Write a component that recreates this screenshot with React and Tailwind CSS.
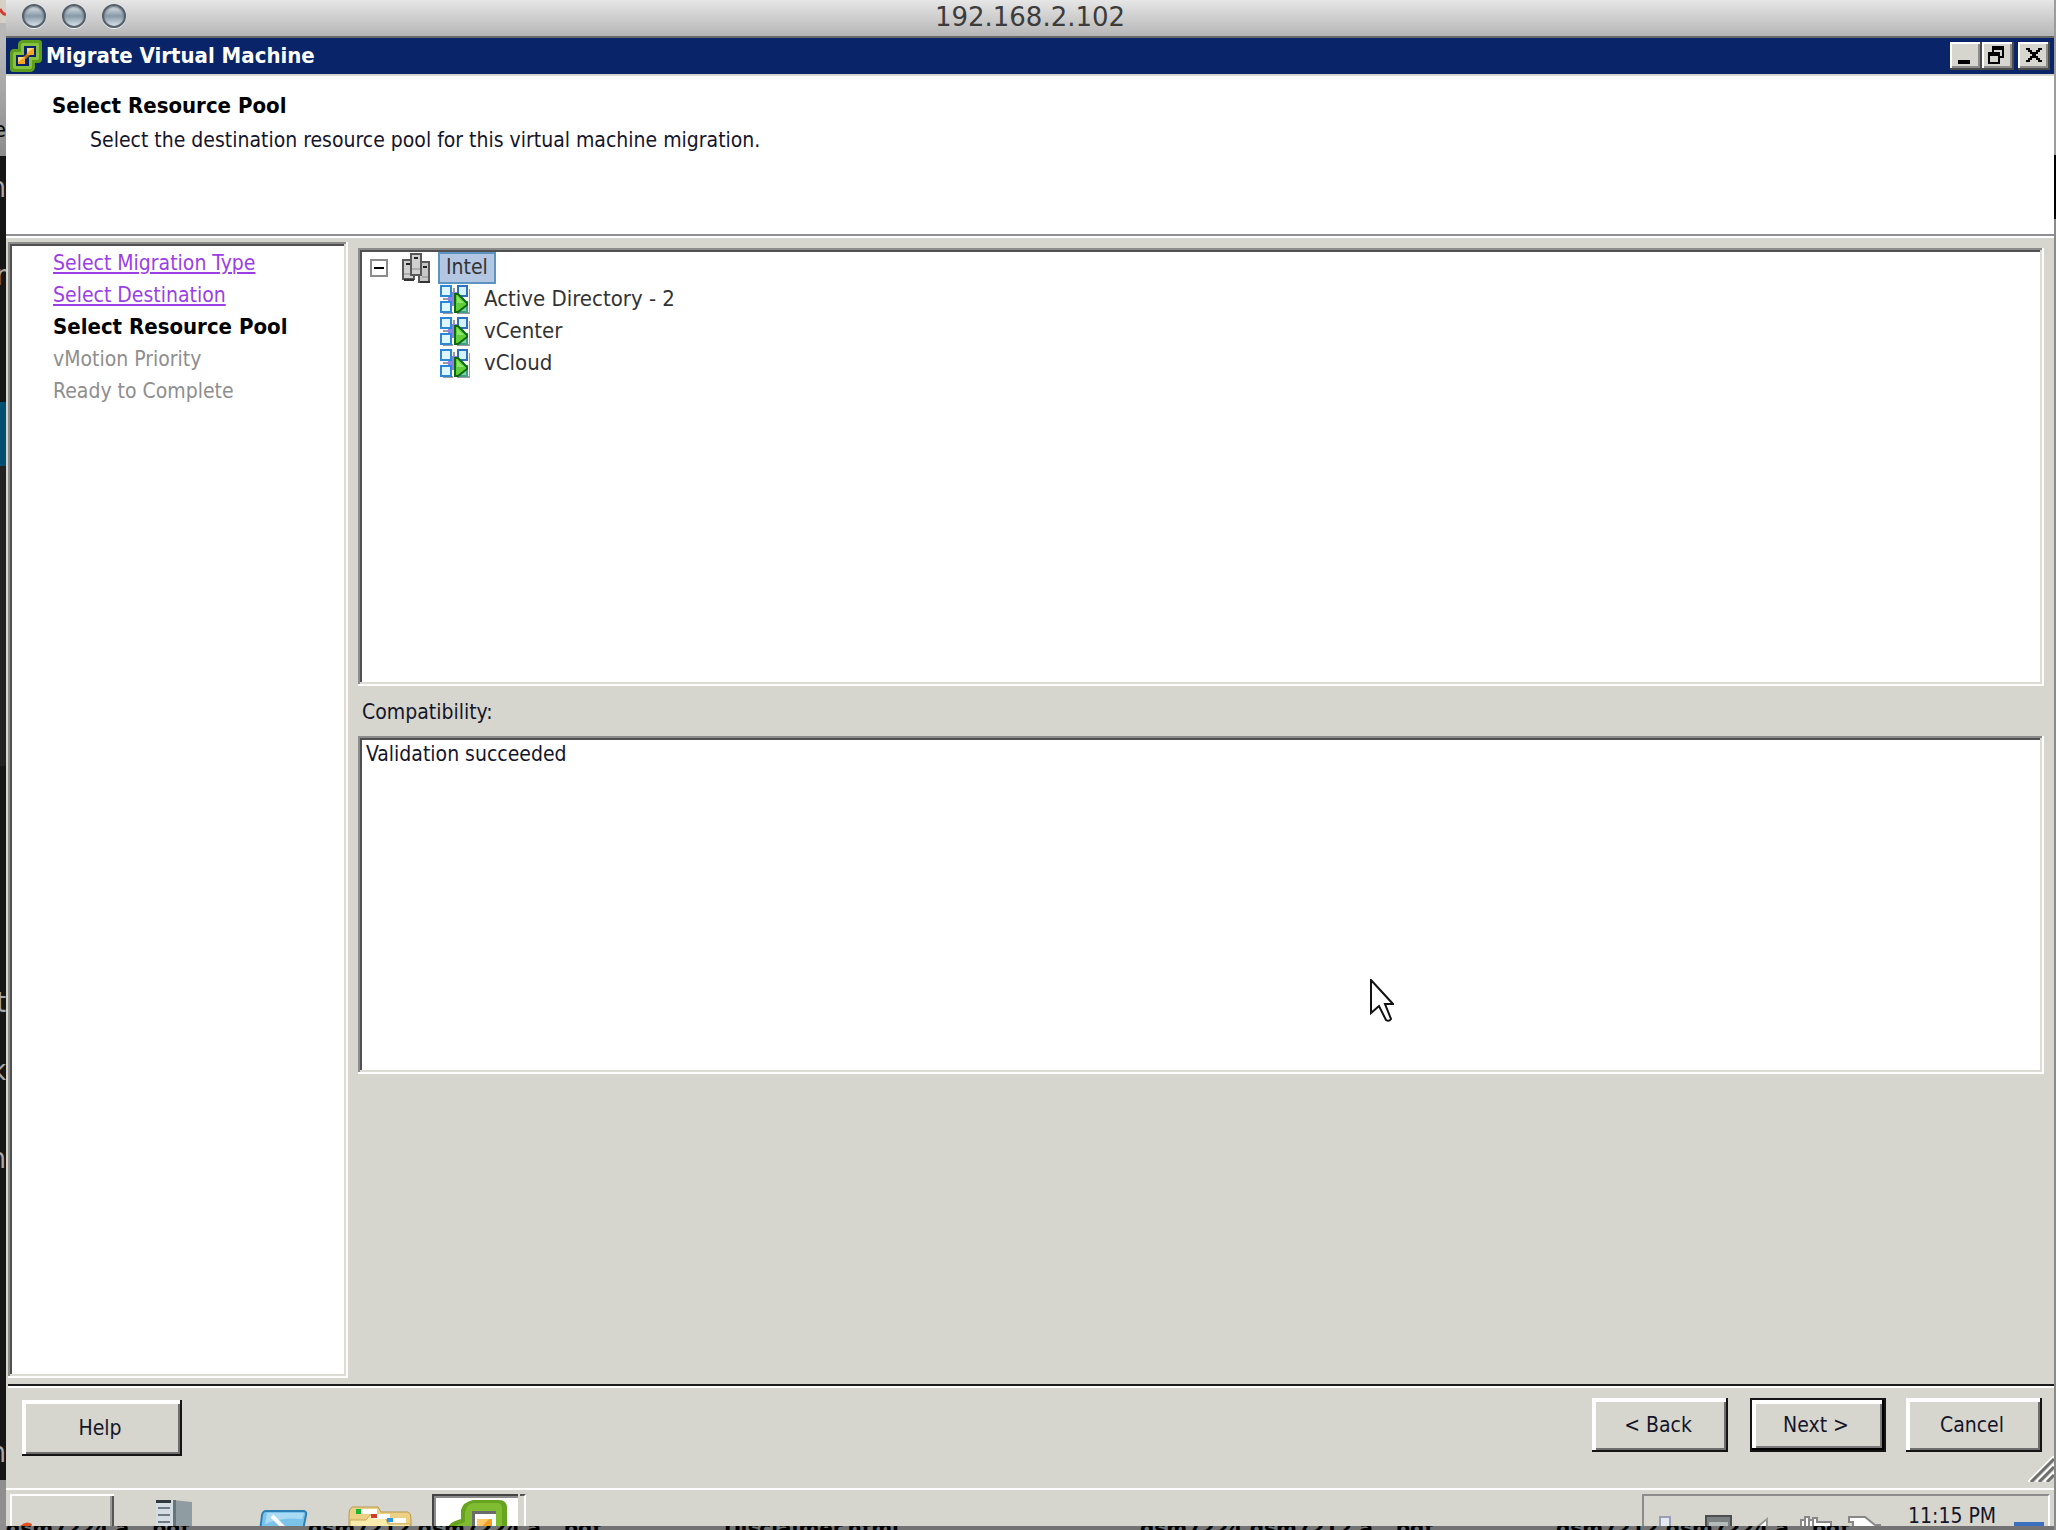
import React from "react";

const sunken =
  "shadow-[inset_-2px_-2px_0_#fdfdfb,inset_2px_2px_0_#8c8c8c,inset_-4px_-4px_0_#dcdcd5,inset_4px_4px_0_#505050]";
const raised =
  "shadow-[inset_-2px_-2px_0_#141414,inset_4px_4px_0_#ffffff,inset_-4px_-4px_0_#6e6e6e]";
const raisedDefault =
  "border-2 border-[#141414] shadow-[inset_-2px_-2px_0_#000000,inset_4px_4px_0_#ffffff,inset_-4px_-4px_0_#7a7a7a]";
const captionButton =
  "flex h-7 w-8 items-center justify-center bg-[#d6d6ce] shadow-[inset_-2px_-2px_0_#4a4a4a,inset_2px_2px_0_#ffffff,inset_-4px_-4px_0_#8c8c8c]";

function VSphereLogo({ className }) {
  return (
    <svg viewBox="0 0 32 32" className={className} aria-hidden="true">
      <path
        d="M13 0H29Q32 0 32 3V19Q32 22 29 23H25V28Q24 32 20 32H3Q0 32 0 29V13Q0 10 3 9H8V4Q9 0 13 0Z"
        fill="#5d9c1d"
      />
      <path
        d="M13 3H28Q29 3 29 5V18Q29 20 27 20H22V27Q22 29 20 29H5Q3 29 3 27V14Q3 12 5 12H11V5Q11 3 13 3Z"
        fill="#86c23e"
      />
      <path d="M14 6H26V17H19V26H6V15H14Z" fill="#0a246a" />
      <path d="M12 18L20 11V15L16 19Z" fill="#b0700f" />
      <rect x="17" y="8" width="7" height="7" fill="#f6a623" />
      <rect x="8" y="17" width="7" height="7" fill="#f6a623" />
      <path d="M17 8H24L17 13ZM8 17H15L8 22Z" fill="#ffd277" />
    </svg>
  );
}

function ClusterIcon() {
  return (
    <svg viewBox="0 0 28 30" className="h-[30px] w-7 shrink-0" aria-hidden="true">
      <rect x="1" y="7" width="11" height="19" fill="#d0d0d0" stroke="#585858" strokeWidth="2" />
      <rect x="17" y="9" width="10" height="20" fill="#c6c6c6" stroke="#585858" strokeWidth="2" />
      <rect x="9" y="1" width="10" height="21" fill="#cfcfcf" stroke="#585858" strokeWidth="2" />
      <path d="M4 11h4M12 5h4M21 14h4" stroke="#222" strokeWidth="2" />
      <path d="M2 21h6M10 16h8M20 24h6" stroke="#8a8a8a" strokeWidth="1" />
      <path d="M2 27h10M18 29h10" stroke="#333" strokeWidth="2" />
    </svg>
  );
}

function PoolIcon() {
  return (
    <svg viewBox="0 0 30 30" className="h-[30px] w-[30px] shrink-0" aria-hidden="true">
      <path d="M3 13h10v2H3zM13 3h2v10h-2zM3 29h10v-2H3zM17 29h13V4h-1v23H17z" fill="#9b9b9b" />
      <path d="M8 7h13v14H8z" fill="#8a84e0" />
      <rect x="1" y="1" width="10" height="10" fill="#dff6ff" stroke="#2a86d8" strokeWidth="2" />
      <rect x="1" y="17" width="10" height="10" fill="#dff6ff" stroke="#2a86d8" strokeWidth="2" />
      <rect x="18" y="1" width="9" height="10" fill="#d3f2fb" stroke="#2e6fc4" strokeWidth="2" />
      <rect x="18" y="17" width="9" height="10" fill="#7fd69a" stroke="#3aa08a" strokeWidth="2" />
      <path d="M15 9H18L27 18V20L18 27H15Z" fill="#5fd03a" stroke="#0e6a12" strokeWidth="2" />
      <path d="M17 11L24 18H17Z" fill="#8ee763" />
    </svg>
  );
}

function TrafficLight({ label }) {
  return (
    <button
      type="button"
      aria-label={label}
      className="h-6 w-6 rounded-full border-2 border-[#56606a] bg-linear-to-b from-[#e2e8ec] via-[#8799a6] to-[#d9e3ea] shadow-[0_1px_0_#f0f0f0,inset_0_1px_2px_#5f6c78]"
    />
  );
}

function DialogButton({ children, look, size }) {
  return (
    <button type="button" className={`flex items-center justify-center bg-[#d6d6ce] pt-0.5 pr-1 ${look} ${size}`}>
      {children}
    </button>
  );
}

function DesktopEdge() {
  const glyph = "flex h-8 w-full items-center justify-end text-[28px] leading-8 text-[#a8a8a8]";
  return (
    <div aria-hidden="true" className="flex w-1.5 shrink-0 flex-col overflow-hidden bg-[#161616]">
      <div className="h-[38px] shrink-0 bg-[#d4d0c4]">
        <svg viewBox="0 0 6 38" className="h-full w-full">
          <path d="M0 9Q3 15 6 14" stroke="#d8392f" strokeWidth="3" fill="none" />
          <path d="M0 23H6V38H0Z" fill="#b8b8b8" />
        </svg>
      </div>
      <div className="flex h-[118px] shrink-0 flex-col justify-end bg-linear-to-b from-[#bcbcbc] to-[#8c8c8c] pb-2.5">
        <span className="flex h-8 justify-end text-[22px] leading-8 text-black">e</span>
      </div>
      <div className="flex h-[246px] shrink-0 flex-col pt-4">
        <span className={glyph}>n</span>
        <span className="h-14" />
        <span className={glyph}>r</span>
      </div>
      <div className="h-16 shrink-0 bg-[#004f70]" />
      <div className="h-[300px] shrink-0 bg-[#222222]" />
      <div className="flex grow flex-col pt-[221px]">
        <span className={glyph}>t</span>
        <span className="h-9" />
        <span className={glyph}>k</span>
        <span className="h-14" />
        <span className={glyph}>n</span>
        <span className="h-[262px]" />
        <span className={glyph}>n</span>
      </div>
      <div className="h-[50px] shrink-0 bg-[#8e8e8e]" />
    </div>
  );
}

function MacTitleBar() {
  return (
    <header className="grid h-[38px] shrink-0 grid-cols-[1fr_auto_1fr] items-center border-b-2 border-[#686868] bg-linear-to-b from-[#e6e6e6] to-[#b6b6b6]">
      <div className="flex gap-4 pb-1 pl-4">
        <TrafficLight label="Close window" />
        <TrafficLight label="Minimize window" />
        <TrafficLight label="Zoom window" />
      </div>
      <h1 className="pb-0.5 font-['DejaVu_Sans'] text-[26px] leading-8 text-[#3c3c3c]">192.168.2.102</h1>
      <div />
    </header>
  );
}

function WindowTitleBar() {
  return (
    <div className="flex h-9 shrink-0 items-center bg-[#0a246a] pl-1">
      <VSphereLogo className="h-8 w-8" />
      <h2 className="ml-1 grow text-[22px] leading-8 font-bold text-white">Migrate Virtual Machine</h2>
      <div className="flex pr-1">
        <button type="button" aria-label="Minimize" className={captionButton}>
          <svg viewBox="0 0 32 28" className="h-7 w-8">
            <path d="M8 18h12v4H8z" />
          </svg>
        </button>
        <button type="button" aria-label="Restore" className={captionButton}>
          <svg viewBox="0 0 32 28" className="h-7 w-8">
            <path d="M10 4h12v12h-4v6H6V10h4zM12 8v2h6v4h2V8zM8 14v6h8v-6z" fillRule="evenodd" />
          </svg>
        </button>
        <button type="button" aria-label="Close" className={`ml-1 ${captionButton}`}>
          <svg viewBox="0 0 32 28" className="h-7 w-8">
            <path
              d="M8 6h4v2h2v2h4V8h2V6h4v2h-2v2h-2v2h-2v2h2v2h2v2h2v2h-4v-2h-2v-2h-4v2h-2v2H8v-2h2v-2h2v-2h2v-2h-2v-2h-2V8H8z"
            />
          </svg>
        </button>
      </div>
    </div>
  );
}

function Steps() {
  return (
    <nav aria-label="Wizard steps" className={`w-[340px] shrink-0 bg-white pt-[5px] pl-[45px] ${sunken}`}>
      <ol className="text-[21px] leading-8">
        <li>
          <a href="#type" className="text-[#9a3fe6] underline decoration-2 underline-offset-2">Select Migration Type</a>
        </li>
        <li>
          <a href="#destination" className="text-[#9a3fe6] underline decoration-2 underline-offset-2">Select Destination</a>
        </li>
        <li aria-current="step" className="text-[22px] font-bold text-black">Select Resource Pool</li>
        <li className="text-[#8e8e8e]">vMotion Priority</li>
        <li className="text-[#8e8e8e]">Ready to Complete</li>
      </ol>
    </nav>
  );
}

function PoolTree() {
  return (
    <div className={`h-[438px] bg-white p-1 text-[#333] ${sunken}`}>
      <ul role="tree" aria-label="Resource pools" className="text-[21px] leading-7">
        <li role="treeitem" aria-expanded="true">
          <div className="flex h-8 items-center pl-2">
            <button type="button" aria-label="Collapse Intel" className="flex h-[18px] w-[18px] items-center justify-center border-2 border-[#8c8c8c] bg-white">
              <span className="h-0.5 w-2.5 bg-black" />
            </button>
            <span className="w-3.5" />
            <ClusterIcon />
            <span className="ml-2 h-8 border-2 border-[#5b93c1] bg-[#b3c6e2] px-1.5 leading-[26px]">Intel</span>
          </div>
          <ul role="group" className="text-[22px]">
            {["Active Directory - 2", "vCenter", "vCloud"].map((name) => (
              <li key={name} role="treeitem" className="flex h-8 items-center pl-[78px]">
                <PoolIcon />
                <span className="ml-3.5 pb-0.5">{name}</span>
              </li>
            ))}
          </ul>
        </li>
      </ul>
    </div>
  );
}

function Cursor() {
  return (
    <svg viewBox="0 0 24 44" className="absolute top-[72%] left-[60%] h-11 w-6" aria-hidden="true">
      <path
        d="M1 1V34L9 27L16 41Q19 43 21 40L15 25H23Z"
        fill="#fff"
        stroke="#111"
        strokeWidth="2"
      />
    </svg>
  );
}

function Taskbar() {
  return (
    <footer className="flex h-[38px] shrink-0 items-start overflow-hidden border-t-2 border-white bg-[#d6d6ce] pt-1">
      <button type="button" aria-label="Start" className="ml-1 h-14 w-[104px] pt-4 pl-2 shadow-[inset_2px_2px_0_#fff,inset_-2px_0_0_#555,inset_-4px_0_0_#999]">
        <svg viewBox="0 0 84 24" className="h-6 w-[84px]" aria-hidden="true">
          <path d="M2 8Q8 2 14 6L11 18H0Z" fill="#e2501d" />
          <path d="M15 8Q21 10 28 8L25 18H12Z" fill="#7cb52c" />
          <path d="M34 14h6M44 14h4M60 14h5M74 14h2M34 12v8" stroke="#111" strokeWidth="3" />
        </svg>
      </button>
      <button type="button" aria-label="Server Manager" className="ml-10 pt-1.5">
        <svg viewBox="0 0 40 40" className="h-10 w-10" aria-hidden="true">
          <path d="M2 0h17v40H2z" fill="#d5dde2" />
          <path d="M19 0l19 2v38H19z" fill="#8f9da2" />
          <path d="M19 0h3v40h-3z" fill="#64757c" />
          <path d="M2 0h15v3H2z" fill="#30383c" />
          <path d="M4 8h12M4 15h12M4 22h12" stroke="#6c7b84" strokeWidth="2" />
        </svg>
      </button>
      <button type="button" aria-label="PowerShell" className="ml-16 pt-4">
        <svg viewBox="0 0 50 30" className="h-[30px] w-[50px]" aria-hidden="true">
          <path d="M8 1H45Q49 1 48 5L43 30H1L4 5Q5 1 8 1Z" fill="#7cc3ea" stroke="#2c80b4" strokeWidth="2" />
          <path d="M9 3H46L44 9Q25 7 7 14Z" fill="#a9dbf4" />
          <path d="M14 6L28 20" stroke="#fff" strokeWidth="4" />
        </svg>
      </button>
      <button type="button" aria-label="Explorer" className="ml-10 pt-3">
        <svg viewBox="0 0 64 36" className="h-9 w-16" aria-hidden="true">
          <path d="M4 1H30L33 6H60Q63 7 63 12V36H1V8Q1 3 4 1Z" fill="#ecd084" stroke="#b89a4c" />
          <path d="M2 14H18L22 9H36L40 18H62V36H2Z" fill="#f9ebac" stroke="#c8a85c" />
          <path d="M9 3h20v5H9zM26 8h16v5H26zM42 12h16v5H42z" fill="#fff" />
          <path d="M8 3h5v5H8z" fill="#18b830" />
          <path d="M23 8h6v4h-6z" fill="#d23b2b" />
          <path d="M39 12h6v4h-6z" fill="#2a96e8" />
        </svg>
      </button>
      <button type="button" aria-label="VMware vSphere Client" className="ml-5 flex h-14 w-[86px] justify-center bg-white pt-1.5 pl-1 shadow-[inset_2px_2px_0_#444,inset_4px_4px_0_#8c8c8c]">
        <svg viewBox="0 0 60 60" className="h-[60px] w-[60px]" aria-hidden="true">
          <path d="M26 0H52Q60 0 60 8V60H0V32Q0 24 8 21L14 19V10Q16 2 26 0Z" fill="#66a31f" />
          <path d="M26 3H51Q55 3 55 9V60H4V32Q5 27 10 25L18 22V12Q20 4 26 3Z" fill="#7fbc32" />
          <path d="M25 11H49V60H12V36L25 28Z" fill="#fff" />
          <path d="M25 11H49V14H28V28H25Z" fill="#6b6b6b" />
          <path d="M30 19H45V40H30Z" fill="#f3a125" />
          <path d="M30 19H42L30 32Z" fill="#ffc766" />
        </svg>
      </button>
      <span className="ml-0.5 h-14 w-1.5 border-t-2 border-r-2 border-t-[#555] border-r-white" />
      <div className="mr-1 ml-auto flex h-14 w-[408px] border-t-2 border-r-2 border-l-2 border-[#8c8c8c] border-r-white pl-3.5">
        <svg viewBox="0 0 230 32" className="h-8 w-[230px]" aria-hidden="true">
          <path d="M2 21h10v11H2z" fill="#e4e8f4" stroke="#9a9eb4" strokeWidth="2" />
          <path d="M48 20H73V32H48Z" fill="#7c8080" stroke="#4c4f50" strokeWidth="2" />
          <path d="M51 26h19v6H51z" fill="#b5baba" />
          <path d="M98 32L109 23V32Z" fill="#fff" stroke="#999" strokeWidth="2" />
          <path d="M143 32V24h4v-3h4v3h4v-2h4v4h14v6Z" fill="#fff" stroke="#888" strokeWidth="2" />
          <path d="M147 25v7M151 25v7M155 25v7" stroke="#888" strokeWidth="2" />
          <path d="M191 21H207L217 29H222V32H195V26H191Z" fill="#fff" stroke="#888" strokeWidth="2" />
        </svg>
        <time className="ml-5 pt-1 text-[21px] leading-8 whitespace-nowrap text-[#15152a]">11:15 PM</time>
        <span className="mt-[26px] mr-1 ml-auto h-5 w-[30px] bg-[#3b6fc0]" />
      </div>
    </footer>
  );
}

function DesktopBottom() {
  return (
    <div aria-hidden="true" className="grid h-1 shrink-0 grid-cols-[302px_416px_416px_416px_auto] items-center overflow-hidden bg-[#737373] font-['DejaVu_Sans'] text-[20px] leading-1 font-bold whitespace-nowrap text-black">
      <span>gsm7224 a...pdf</span>
      <span>gsm7212 gsm7224 a...pdf</span>
      <span>Disclaimer.html</span>
      <span>gsm7224 gsm7212 a...pdf</span>
      <span>gsm7212 gsm7224 a...pdf</span>
    </div>
  );
}

export default function App() {
  return (
    <div className="flex min-h-screen w-full bg-[#161616] font-['DejaVu_Sans_Condensed','Noto_Sans',sans-serif]">
      <DesktopEdge />
      <div className="flex min-w-0 grow flex-col">
        <MacTitleBar />
        <WindowTitleBar />
        <main className="flex grow flex-col bg-[#d6d6ce]">
          <section className="h-[164px] shrink-0 border-t-2 border-b-2 border-t-[#d6d6ce] border-b-white bg-white">
            <div className="h-40 border-b-2 border-[#8e8e94] pt-3.5 pl-[46px]">
              <h3 className="text-[22px] leading-8 font-bold text-black">Select Resource Pool</h3>
              <p className="pt-0.5 pl-[38px] text-[21px] leading-8 text-[#15152a]">
                Select the destination resource pool for this virtual machine migration.
              </p>
            </div>
          </section>
          <div className="flex grow gap-2.5 pt-1 pr-2.5 pb-1.5 pl-0.5">
            <Steps />
            <div className="flex grow flex-col pt-1.5">
              <PoolTree />
              <label htmlFor="compat" className="pt-2.5 pb-2 pl-1 text-[21px] leading-8 text-[#15152a]">Compatibility:</label>
              <div className="relative flex h-[338px]">
                <textarea
                  id="compat"
                  readOnly
                  defaultValue="Validation succeeded"
                  className={`w-full resize-none bg-white px-2 py-0.5 text-[21px] leading-8 text-[#15152a] outline-none ${sunken}`}
                />
                <Cursor />
              </div>
            </div>
          </div>
          <div className="ml-0.5 flex h-[104px] shrink-0 items-start border-t-2 border-[#1c1c1c] pt-3 pl-3.5 text-[21px] text-[#15152a] shadow-[inset_0_2px_0_#fff]">
            <div className="pt-0.5">
              <DialogButton look={raised} size="h-14 w-40">Help</DialogButton>
            </div>
            <div className="ml-auto flex pr-3">
              <DialogButton look={raised} size="h-[54px] w-[136px]">&lt; Back</DialogButton>
              <span className="w-[22px]" />
              <DialogButton look={raisedDefault} size="h-[54px] w-[136px]">Next &gt;</DialogButton>
              <span className="w-5" />
              <DialogButton look={raised} size="h-[54px] w-[136px]">Cancel</DialogButton>
            </div>
          </div>
        </main>
        <div className="relative">
          <svg viewBox="0 0 26 26" className="absolute right-0 bottom-1.5 h-[26px] w-[26px]" aria-hidden="true">
            <path d="M0 26L26 0M8 26L26 8M16 26L26 16" stroke="#fff" strokeWidth="2" />
            <path d="M3 26L26 3M11 26L26 11M19 26L26 19" stroke="#6e6e6e" strokeWidth="3" />
          </svg>
        </div>
        <Taskbar />
        <DesktopBottom />
      </div>
      <div aria-hidden="true" className="flex w-0.5 shrink-0 flex-col bg-[#8a8a8a]">
        <div className="h-[155px] bg-[#9c9c9c]" />
        <div className="h-16 bg-black" />
      </div>
    </div>
  );
}
